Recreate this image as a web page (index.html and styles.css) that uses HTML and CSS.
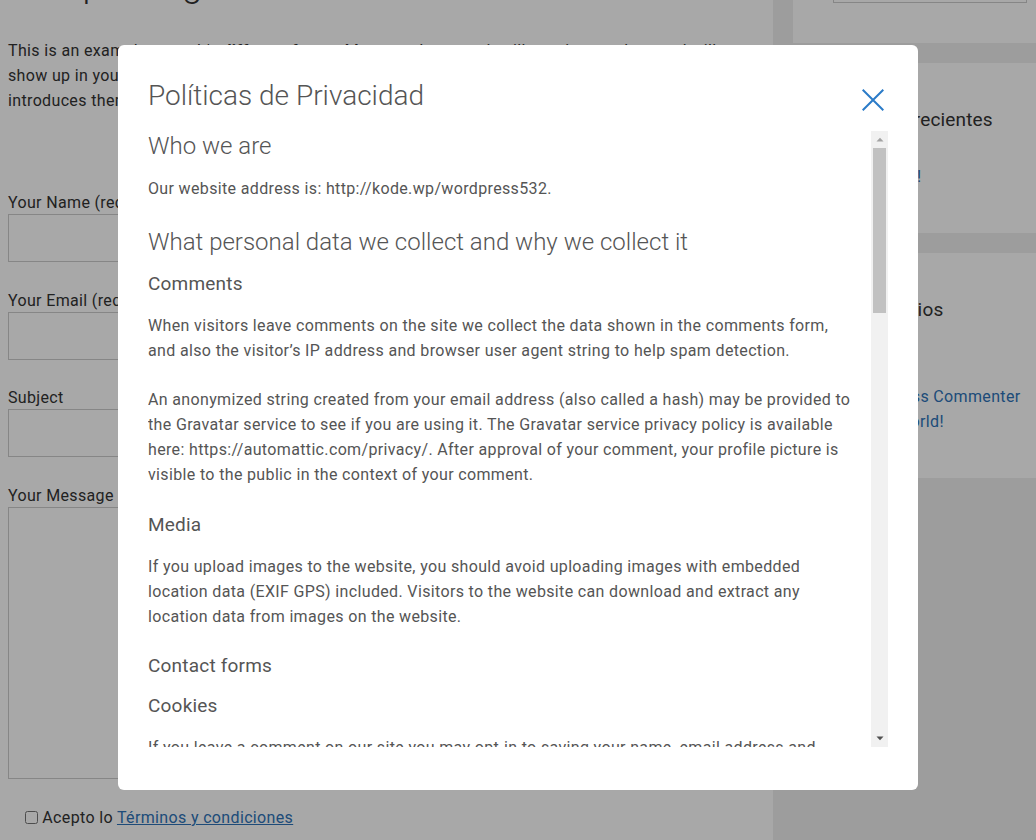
FILE: index.html
```html
<!DOCTYPE html>
<html lang="es">
<head>
<meta charset="utf-8">
<title>Sample Page</title>
<link rel="stylesheet" href="styles.css">
</head>
<body>
<div class="page">
  <main class="main">
    <h1 class="page-title">Sample Page</h1>
    <p class="intro">This is an example page. It's <strong>different from a blog post</strong> because it will stay in one place and will show up in your site navigation (in most themes). Most people start with an About page that introduces them to potential site visitors. It might say something like this:</p>
    <form class="form">
      <div class="field"><label class="label">Your Name (required)</label><input class="input" type="text"></div>
      <div class="field"><label class="label">Your Email (required)</label><input class="input" type="text"></div>
      <div class="field"><label class="label">Subject</label><input class="input" type="text"></div>
      <div class="field"><label class="label">Your Message</label><textarea class="textarea"></textarea></div>
      <p class="accept"><input class="check" type="checkbox"> Acepto lo <a class="link underline" href="#">Términos y condiciones</a></p>
    </form>
  </main>
  <aside class="sidebar">
    <section class="widget">
      <input class="search" type="text">
    </section>
    <section class="widget">
      <h2 class="widget-title">Entradas recientes</h2>
      <ul class="widget-list">
        <li><a class="link" href="#">Hello world!</a></li>
      </ul>
    </section>
    <section class="widget">
      <h2 class="widget-title">Comentarios recientes</h2>
      <ul class="widget-list">
        <li><a class="link" href="#">A WordPress Commenter</a> en <a class="link" href="#">Hello world!</a></li>
      </ul>
    </section>
  </aside>
</div>

<div class="overlay">
  <div class="modal">
    <div class="modal-head">
      <h1 class="modal-title">Políticas de Privacidad</h1>
      <button class="close" type="button" aria-label="Cerrar">
        <svg width="22" height="22" viewBox="0 0 22 22"><path d="M0.7 0.7L21.3 21.3M21.3 0.7L0.7 21.3" stroke="#2b7bc8" stroke-width="2" fill="none"/></svg>
      </button>
    </div>
    <div class="scroll-row">
      <div class="scroll-content">
        <h2 class="h2">Who we are</h2>
        <p class="p">Our website address is: http://kode.wp/wordpress532.</p>
        <h2 class="h2">What personal data we collect and why we collect it</h2>
        <h3 class="h3">Comments</h3>
        <p class="p">When visitors leave comments on the site we collect the data shown in the comments form, and also the visitor’s IP address and browser user agent string to help spam detection.</p>
        <p class="p">An anonymized string created from your email address (also called a hash) may be provided to the Gravatar service to see if you are using it. The Gravatar service privacy policy is available here: https://automattic.com/privacy/. After approval of your comment, your profile picture is visible to the public in the context of your comment.</p>
        <h3 class="h3">Media</h3>
        <p class="p">If you upload images to the website, you should avoid uploading images with embedded location data (EXIF GPS) included. Visitors to the website can download and extract any location data from images on the website.</p>
        <h3 class="h3">Contact forms</h3>
        <h3 class="h3">Cookies</h3>
        <p class="p">If you leave a comment on our site you may opt-in to saving your name, email address and website in cookies. These are for your convenience so that you do not have to fill in your details again when you leave another comment. These cookies will last for one year.</p>
        <p class="p">If you have an account and you log in to this site, we will set a temporary cookie to determine if your browser accepts cookies. This cookie contains no personal data and is discarded when you close your browser.</p>
        <p class="p">When you log in, we will also set up several cookies to save your login information and your screen display choices. Login cookies last for two days, and screen options cookies last for a year. If you select "Remember Me", your login will persist for two weeks. If you log out of your account, the login cookies will be removed.</p>
        <p class="p">If you edit or publish an article, an additional cookie will be saved in your browser. This cookie includes no personal data and simply indicates the post ID of the article you just edited. It expires after 1 day.</p>
        <h3 class="h3">Embedded content from other websites</h3>
        <p class="p">Articles on this site may include embedded content (e.g. videos, images, articles, etc.). Embedded content from other websites behaves in the exact same way as if the visitor has visited the other website.</p>
        <p class="p">These websites may collect data about you, use cookies, embed additional third-party tracking, and monitor your interaction with that embedded content, including tracking your interaction with the embedded content if you have an account and are logged in to that website.</p>
        <h3 class="h3">Analytics</h3>
        <h2 class="h2">Who we share your data with</h2>
        <h2 class="h2">How long we retain your data</h2>
        <p class="p">If you leave a comment, the comment and its metadata are retained indefinitely. This is so we can recognize and approve any follow-up comments automatically instead of holding them in a moderation queue.</p>
        <p class="p">For users that register on our website (if any), we also store the personal information they provide in their user profile. All users can see, edit, or delete their personal information at any time (except they cannot change their username). Website administrators can also see and edit that information.</p>
        <h2 class="h2">What rights you have over your data</h2>
        <p class="p">If you have an account on this site, or have left comments, you can request to receive an exported file of the personal data we hold about you, including any data you have provided to us. You can also request that we erase any personal data we hold about you. This does not include any data we are obliged to keep for administrative, legal, or security purposes.</p>
        <h2 class="h2">Where we send your data</h2>
        <p class="p">Visitor comments may be checked through an automated spam detection service.</p>
        <h2 class="h2">Your contact information</h2>
        <h2 class="h2">Additional information</h2>
        <h3 class="h3">How we protect your data</h3>
        <h3 class="h3">What data breach procedures we have in place</h3>
        <h3 class="h3">What third parties we receive data from</h3>
        <h3 class="h3">What automated decision making and/or profiling we do with user data</h3>
        <h3 class="h3">Industry regulatory disclosure requirements</h3>
      </div>
      <div class="scrollbar" aria-hidden="true">
        <span class="sb-btn"><svg width="8" height="5" viewBox="0 0 8 5"><path d="M0.5 4.5h7L4 0.8z" fill="#a3a3a3"/></svg></span>
        <div class="sb-track"><div class="sb-thumb"></div></div>
        <span class="sb-btn"><svg width="8" height="5" viewBox="0 0 8 5"><path d="M0.5 0.5h7L4 4.2z" fill="#505050"/></svg></span>
      </div>
    </div>
  </div>
</div>
</body>
</html>
```

FILE: styles.css
```css
html, body {
  margin: 0;
  overflow: hidden;
  height: 100%;
}
body {
  background: #eeeeee;
  font-family: Roboto, "Liberation Sans", sans-serif;
  color: #333333;
  font-size: 16px;
  line-height: 25px;
  letter-spacing: 0.35px;
}

/* ---------- background page ---------- */
.page {
  display: flex;
  align-items: flex-start;
  margin-top: -75px;
  width: 1067px;
}
.main {
  width: 773px;
  flex: none;
  min-height: 1000px;
  box-sizing: border-box;
  background: #ffffff;
  padding: 35px 8px 0;
}
.page-title {
  margin: 0;
  font-size: 37px;
  line-height: 48px;
  font-weight: 300;
  letter-spacing: 0;
  color: #333;
}
.intro {
  margin: 30px 0 0;
  padding-right: 20px;
}
.form {
  margin-top: 78px;
}
.field {
  margin-bottom: 26.5px;
}
.label {
  display: block;
  line-height: 23px;
}
.input {
  display: block;
  width: 100%;
  height: 48px;
  box-sizing: border-box;
  border: 1px solid #cccccc;
  background: #fff;
}
.textarea {
  display: block;
  width: 100%;
  height: 272px;
  box-sizing: border-box;
  border: 1px solid #cccccc;
  background: #fff;
  resize: none;
}
.accept {
  margin: 0;
  padding: 1px 0 0 13px;
  line-height: 24px;
}
.check {
  vertical-align: -1px;
  margin-right: 0;
}
.link {
  color: #2e73b8;
  text-decoration: none;
}
.underline {
  text-decoration: underline;
}

.sidebar {
  width: 274px;
  flex: none;
  margin-left: 20px;
  display: flex;
  flex-direction: column;
  gap: 20px;
}
.widget {
  background: #fff;
  padding: 40px;
}
.search {
  display: block;
  width: 100%;
  height: 38px;
  box-sizing: border-box;
  border: 1px solid #cccccc;
}
.widget-title {
  margin: 2px 0 29px;
  font-size: 19px;
  line-height: 30px;
  font-weight: 400;
  letter-spacing: 0.15px;
  color: #333;
}
.widget-list {
  list-style: none;
  margin: 0 0 4px;
  padding: 0;
}

/* ---------- modal ---------- */
.overlay {
  position: fixed;
  inset: 0;
  background: rgba(0, 0, 0, 0.34);
  display: flex;
  justify-content: center;
  align-items: flex-start;
  padding-top: 45px;
}
.modal {
  width: 800px;
  height: 745px;
  box-sizing: border-box;
  background: #fff;
  border-radius: 6px;
  padding: 31px 30px 43px;
  display: flex;
  flex-direction: column;
  color: #555555;
}
.modal-head {
  display: flex;
  justify-content: space-between;
  align-items: flex-start;
  margin-bottom: 14px;
}
.modal-title {
  margin: 0;
  font-size: 28px;
  line-height: 40px;
  font-weight: 300;
  letter-spacing: 0;
  color: #555;
}
.close {
  border: 0;
  background: none;
  padding: 0;
  margin: 13px 4px 0 0;
  width: 22px;
  height: 22px;
  cursor: pointer;
}
.close svg {
  display: block;
}
.scroll-row {
  flex: 1;
  min-height: 0;
  display: flex;
}
.scroll-content {
  flex: 1;
  min-width: 0;
  overflow: hidden;
  padding-right: 15px;
}
.scrollbar {
  width: 17px;
  flex: none;
  margin-top: 1px;
  background: #f1f1f1;
  display: flex;
  flex-direction: column;
}
.sb-btn {
  height: 17px;
  flex: none;
  display: flex;
  align-items: center;
  justify-content: center;
}
.sb-btn svg {
  display: block;
}
.sb-track {
  flex: 1;
}
.sb-thumb {
  height: 165px;
  margin: 0 2px;
  background: #c1c1c1;
}

/* policy content: spacing set between neighbours */
.h2, .h3, .p {
  margin: 0;
}
.h2 {
  font-size: 24px;
  line-height: 32px;
  font-weight: 300;
  letter-spacing: 0;
  color: #555;
}
.h3 {
  font-size: 19px;
  line-height: 27px;
  font-weight: 400;
  letter-spacing: 0.2px;
  color: #555;
}
.p {
  font-size: 16px;
  line-height: 25px;
}
.h2 + .p { margin-top: 14px; }
.h2 + .h3 { margin-top: 12px; }
.h2 + .h2 { margin-top: 14px; }
.h3 + .p { margin-top: 16px; }
.h3 + .h3 { margin-top: 13px; }
.h3 + .h2 { margin-top: 16px; }
.p + .p { margin-top: 24px; }
.p + .h2 { margin-top: 25px; }
.p + .p { margin-top: 24px; }
.p + .h3 { margin-top: 23.5px; }
```
